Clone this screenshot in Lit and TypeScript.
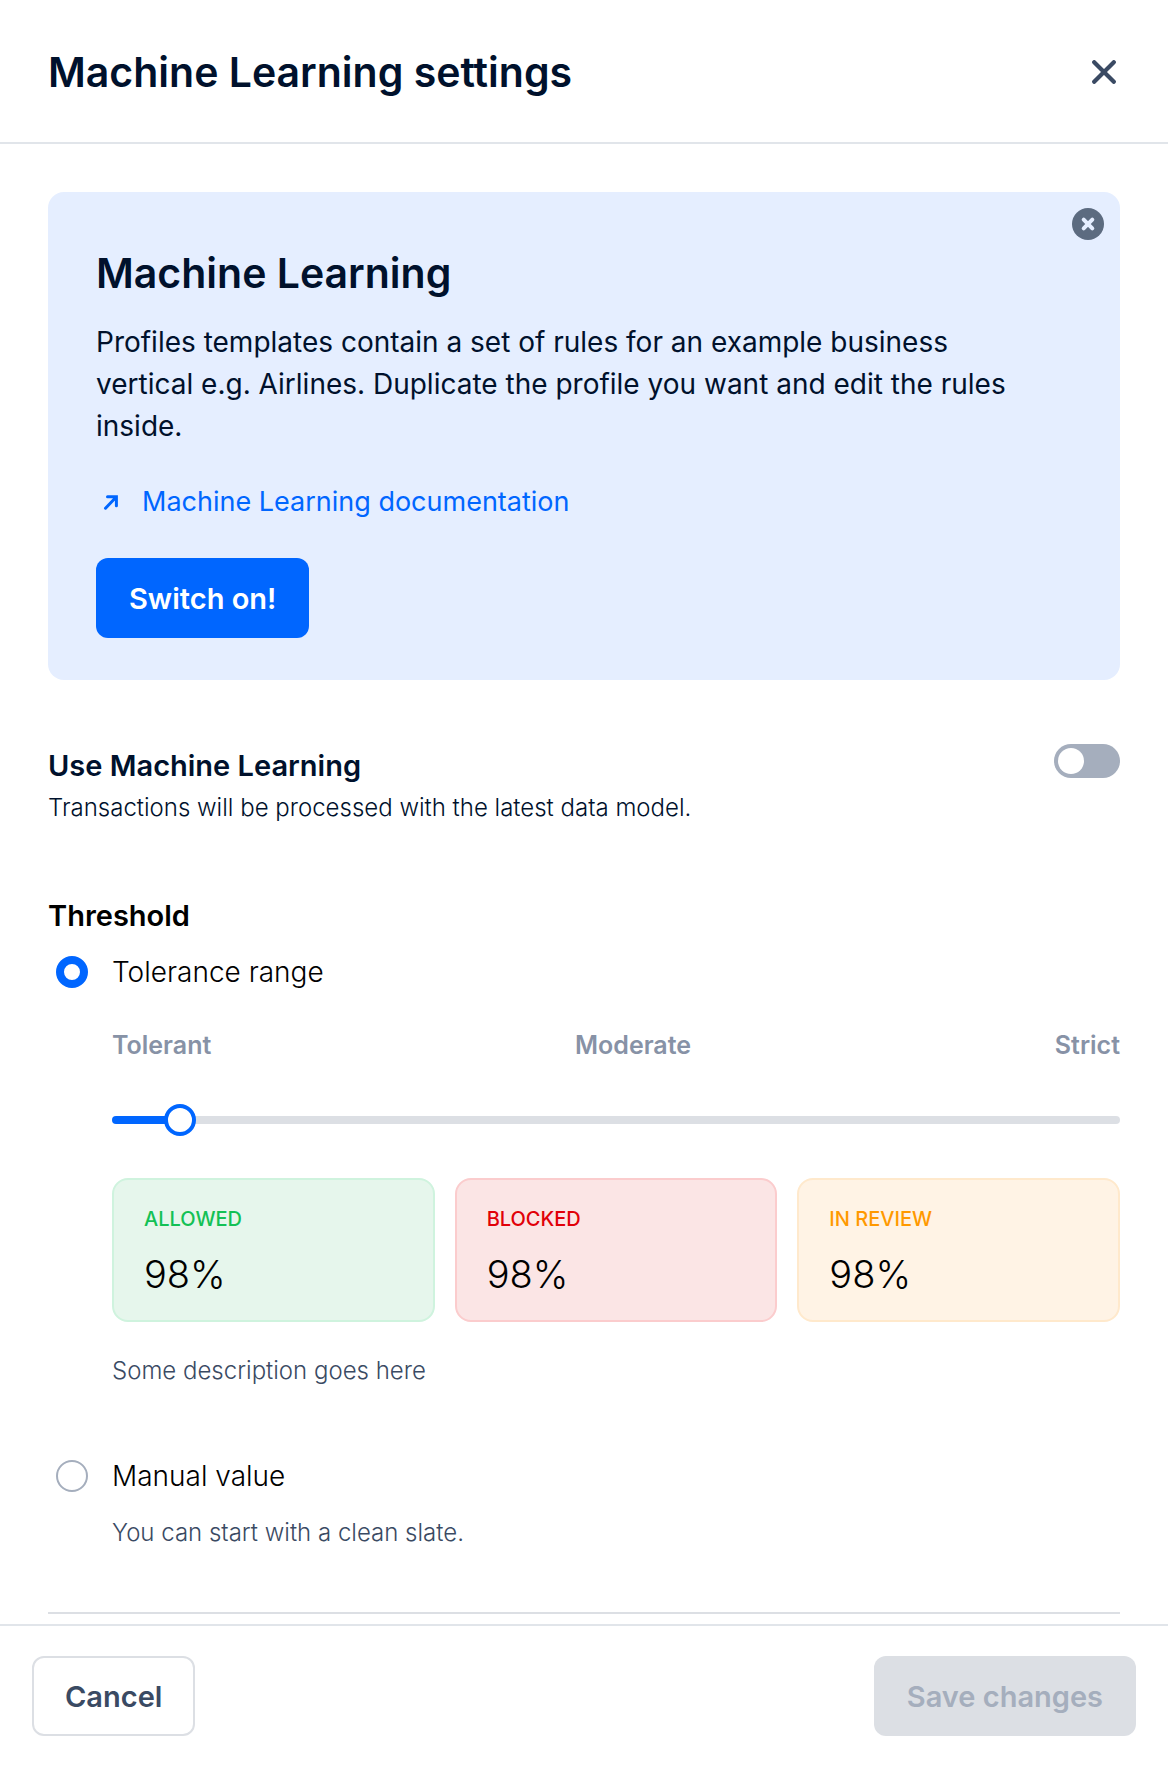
import { LitElement, html, css } from "lit";
import { customElement, property, state } from "lit/decorators.js";
import { classMap } from "lit/directives/class-map.js";
import { styleMap } from "lit/directives/style-map.js";

type Tone = "allowed" | "blocked" | "review";

@customElement("stat-card")
export class StatCard extends LitElement {
  @property() tone: Tone = "allowed";
  @property() label = "";
  @property() value = "";

  static styles = css`
    :host {
      display: block;
    }
    .card {
      padding: 25px 30px 22px;
      border: 2px solid;
      border-radius: 16px;
    }
    .label {
      font-size: 20px;
      font-weight: 500;
      line-height: 28px;
    }
    .value {
      margin-top: 17px;
      color: #000;
      font-size: 38px;
      font-weight: 300;
      line-height: 48px;
    }
    .allowed {
      color: #13c155;
      background: #e6f6ec;
      border-color: #cff3de;
    }
    .blocked {
      color: #e10008;
      background: #fbe5e5;
      border-color: #fbcccd;
    }
    .review {
      color: #ff9900;
      background: #fff3e5;
      border-color: #ffe9cc;
    }
  `;

  render() {
    return html`
      <div class=${classMap({ card: true, [this.tone]: true })}>
        <div class="label">${this.label}</div>
        <div class="value">${this.value}</div>
      </div>
    `;
  }
}

@customElement("app-root")
export class AppRoot extends LitElement {
  @state() private enabled = false;
  @state() private bannerOpen = true;
  @state() private mode: "range" | "manual" = "range";
  @state() private tolerance = 5.3;

  static styles = css`
    :host {
      display: flex;
      flex-direction: column;
      min-height: 100vh;
      background: #fff;
      color: #00112c;
      font-family: Inter, "Liberation Sans", sans-serif;
      font-size: 28px;
      line-height: 42px;
    }
    * {
      box-sizing: border-box;
    }
    h1,
    h2,
    h3,
    p {
      margin: 0;
    }
    button,
    input {
      margin: 0;
      font-family: inherit;
    }
    svg {
      display: block;
      fill: none;
      stroke: currentColor;
    }

    .header {
      display: flex;
      align-items: center;
      justify-content: space-between;
      padding: 48px 48px 46px;
      border-bottom: 2px solid #e1e5ea;
    }
    .header h1,
    .banner h2 {
      font-size: 41px;
      font-weight: 600;
      line-height: 48px;
    }
    .close {
      padding: 4px;
      border: 0;
      background: none;
      color: #3a4a63;
      cursor: pointer;
    }

    .content {
      flex: 1;
      padding: 48px 48px 10px;
    }
    .banner {
      position: relative;
      margin-bottom: 64px;
      padding: 57px 48px 42px;
      border-radius: 16px;
      background: #e5eeff;
    }
    .banner p {
      margin-top: 24px;
      padding-right: 48px;
    }
    .dismiss {
      position: absolute;
      top: 16px;
      right: 16px;
      padding: 8px;
      border: 0;
      border-radius: 50%;
      background: #5c6b80;
      color: #e5eeff;
      cursor: pointer;
    }
    .doc-link {
      display: flex;
      align-items: center;
      gap: 16px;
      width: fit-content;
      margin: 35px 0 36px;
      color: #0066ff;
      font-size: 27px;
      line-height: 40px;
      text-decoration: none;
    }

    .btn {
      height: 80px;
      padding: 0 31px;
      border: 2px solid transparent;
      border-radius: 12px;
      font-size: 29px;
      font-weight: 600;
      cursor: pointer;
    }
    .primary {
      background: #0066ff;
      color: #fff;
    }
    .secondary {
      background: #fff;
      border-color: #dcdfe4;
      color: #3a4a63;
    }
    .btn:disabled {
      background: #dcdfe4;
      color: #a5aebd;
      cursor: default;
    }

    .setting {
      display: flex;
      align-items: flex-start;
      justify-content: space-between;
      margin-bottom: 66px;
    }
    .setting-text {
      padding-top: 1px;
    }
    .name {
      display: block;
      font-size: 29px;
      font-weight: 600;
      line-height: 42px;
    }
    .note {
      font-size: 24px;
      font-weight: 300;
    }
    .switch {
      display: flex;
      appearance: none;
      width: 66px;
      height: 34px;
      padding: 4px;
      border-radius: 17px;
      background: #a5aebd;
      cursor: pointer;
    }
    .switch::before {
      content: "";
      width: 26px;
      height: 26px;
      border-radius: 50%;
      background: #fff;
    }
    .switch:checked {
      justify-content: flex-end;
      background: #0066ff;
    }

    .threshold {
      color: #000;
    }
    .option {
      display: flex;
      align-items: center;
      gap: 24px;
      margin-top: 14px;
      padding-left: 8px;
      font-weight: 300;
      cursor: pointer;
    }
    .option input {
      appearance: none;
      width: 32px;
      height: 32px;
      border: 2px solid #a5aebd;
      border-radius: 50%;
      background: #fff;
    }
    .option input:checked {
      border: 8px solid #0066ff;
    }
    .detail {
      margin-left: 64px;
    }
    .detail .note {
      color: #3a4a63;
    }
    .scale {
      display: flex;
      justify-content: space-between;
      margin-top: 36px;
      color: #8792a6;
      font-size: 25px;
      font-weight: 600;
      line-height: 32px;
    }
    .slider {
      display: block;
      appearance: none;
      width: 100%;
      height: 32px;
      margin: 43px 0 42px;
      background: none;
      cursor: pointer;
    }
    .slider::-webkit-slider-runnable-track {
      height: 8px;
      border-radius: 4px;
      background: linear-gradient(
        to right,
        #0066ff var(--fill),
        #dcdfe4 var(--fill)
      );
    }
    .slider::-webkit-slider-thumb {
      appearance: none;
      width: 32px;
      height: 32px;
      margin-top: -12px;
      border: 4px solid #0066ff;
      border-radius: 50%;
      background: #fff;
    }
    .cards {
      display: grid;
      grid-template-columns: repeat(3, 1fr);
      gap: 20px;
      margin-bottom: 28px;
    }
    .manual {
      margin-top: 63px;
    }
    .manual-note {
      margin-top: 15px;
    }
    .divider {
      height: 2px;
      margin: 58px 0 0;
      border: 0;
      background: #dcdfe4;
    }

    .footer {
      position: sticky;
      bottom: 0;
      display: flex;
      justify-content: space-between;
      padding: 30px 32px 32px;
      border-top: 2px solid #e1e5ea;
      background: #fff;
    }
  `;

  private renderBanner() {
    return html`
      <section class="banner">
        <button
          class="dismiss"
          aria-label="Dismiss"
          @click=${() => (this.bannerOpen = false)}
        >
          <svg width="16" height="16" viewBox="0 0 16 16" stroke-width="4" stroke-linecap="round">
            <path d="M3.7 3.7L12.3 12.3M12.3 3.7L3.7 12.3" />
          </svg>
        </button>
        <h2>Machine Learning</h2>
        <p>
          Profiles templates contain a set of rules for an example business
          vertical e.g. Airlines. Duplicate the profile you want and edit the
          rules inside.
        </p>
        <a class="doc-link" href="#documentation">
          <svg width="30" height="30" viewBox="0 0 30 30" stroke-width="3" stroke-linecap="round" stroke-linejoin="miter">
            <path d="M9.5 21.2L20 10.2M11.5 9.7H20.4V18.7" />
          </svg>
          Machine Learning documentation
        </a>
        <button class="btn primary" @click=${() => (this.enabled = true)}>
          Switch on!
        </button>
      </section>
    `;
  }

  render() {
    const ratio = this.tolerance / 100;
    const fill = `calc(16px + (100% - 32px) * ${ratio})`;
    return html`
      <header class="header">
        <h1>Machine Learning settings</h1>
        <button class="close" aria-label="Close">
          <svg width="24" height="24" viewBox="0 0 24 24" stroke-width="4.2" stroke-linecap="round">
            <path d="M2.2 2.2L21.8 21.8M21.8 2.2L2.2 21.8" />
          </svg>
        </button>
      </header>

      <main class="content">
        ${this.bannerOpen ? this.renderBanner() : null}

        <section class="setting">
          <div class="setting-text">
            <label class="name" for="use-ml">Use Machine Learning</label>
            <p class="note" id="use-ml-note">
              Transactions will be processed with the latest data model.
            </p>
          </div>
          <input
            class="switch"
            id="use-ml"
            type="checkbox"
            role="switch"
            aria-describedby="use-ml-note"
            .checked=${this.enabled}
            @change=${(e: Event) =>
              (this.enabled = (e.target as HTMLInputElement).checked)}
          />
        </section>

        <section class="threshold" role="radiogroup" aria-labelledby="threshold">
          <h3 class="name" id="threshold">Threshold</h3>

          <label class="option">
            <input
              type="radio"
              name="threshold"
              .checked=${this.mode === "range"}
              @change=${() => (this.mode = "range")}
            />
            Tolerance range
          </label>
          <div class="detail">
            <div class="scale">
              <span>Tolerant</span>
              <span>Moderate</span>
              <span>Strict</span>
            </div>
            <input
              class="slider"
              type="range"
              aria-label="Tolerance range"
              min="0"
              max="100"
              step="any"
              .value=${String(this.tolerance)}
              style=${styleMap({ "--fill": fill })}
              @input=${(e: Event) =>
                (this.tolerance = (e.target as HTMLInputElement).valueAsNumber)}
            />
            <div class="cards">
              <stat-card tone="allowed" label="ALLOWED" value="98%"></stat-card>
              <stat-card tone="blocked" label="BLOCKED" value="98%"></stat-card>
              <stat-card tone="review" label="IN REVIEW" value="98%"></stat-card>
            </div>
            <p class="note">Some description goes here</p>
          </div>

          <label class="option manual">
            <input
              type="radio"
              name="threshold"
              .checked=${this.mode === "manual"}
              @change=${() => (this.mode = "manual")}
            />
            Manual value
          </label>
          <div class="detail manual-note">
            <p class="note">You can start with a clean slate.</p>
          </div>
        </section>

        <hr class="divider" />
      </main>

      <footer class="footer">
        <button class="btn secondary">Cancel</button>
        <button class="btn" disabled>Save changes</button>
      </footer>
    `;
  }
}
